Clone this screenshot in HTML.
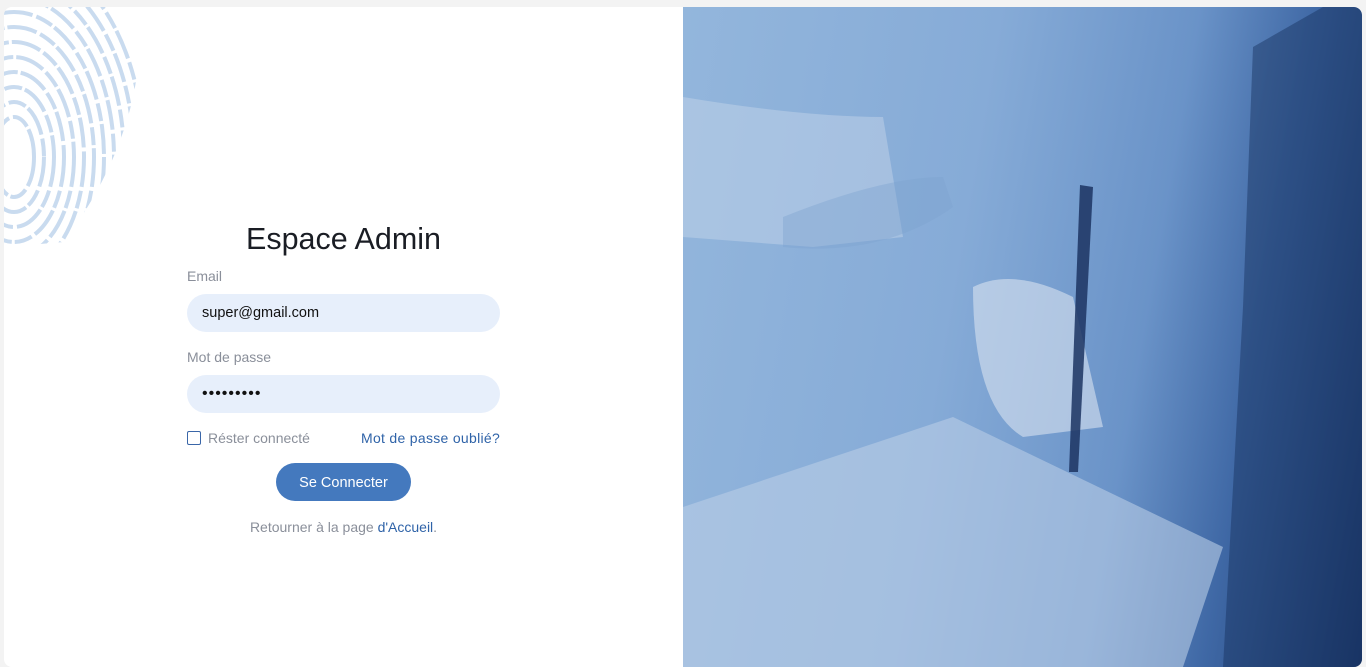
<!DOCTYPE html>
<html><head><meta charset="utf-8"><style>
*{margin:0;padding:0;box-sizing:border-box}
body{width:1366px;height:658px;background:#f3f3f3;font-family:"Liberation Sans",sans-serif;position:relative;overflow:hidden}
.card{position:absolute;left:4px;top:7px;width:1358px;height:660px;background:#fff;border-radius:8px;overflow:hidden}
.fp{position:absolute;left:0;top:0}
.right{position:absolute;left:679px;top:0;width:679px;height:660px;border-top-right-radius:8px;overflow:hidden;background:linear-gradient(100deg,#93b6dc 0%,#86abd7 40%,#6a93c8 65%,#3f68a5 80%,#1b376a 100%)}
h1{position:absolute;left:0;width:679px;top:215px;text-align:center;font-size:30.5px;font-weight:normal;color:#1a1d24}
.lbl{position:absolute;left:183px;font-size:14px;color:#8a8f9a}
.inp{position:absolute;left:183px;width:313px;height:38px;border-radius:19px;background:#e7effb;font-size:14.5px;color:#111;padding:11px 15px}
.cb{position:absolute;left:183px;top:424px;width:14px;height:14px;border:1.5px solid #3a66a8;border-radius:2px}
.btn{position:absolute;left:272px;top:456px;width:135px;height:38px;border-radius:19px;background:#4479be;color:#fff;font-size:14.5px;text-align:center;line-height:40px}
</style></head><body>
<div class="card">
<svg class="fp" width="140" height="240" viewBox="0 0 140 240">
<defs><clipPath id="c"><path d="M0 0H135Q145 120 60 235L0 240Z"/></clipPath></defs>
<g clip-path="url(#c)" fill="none" stroke="#c9dbef" stroke-width="4" stroke-dasharray="30 4 18 3">
<ellipse cx="10" cy="150" rx="20" ry="40"/><ellipse cx="10" cy="150" rx="30" ry="55"/><ellipse cx="10" cy="150" rx="40" ry="70"/><ellipse cx="10" cy="150" rx="50" ry="85"/><ellipse cx="10" cy="150" rx="60" ry="100"/><ellipse cx="10" cy="150" rx="70" ry="115"/><ellipse cx="10" cy="150" rx="80" ry="130"/><ellipse cx="10" cy="150" rx="90" ry="145"/><ellipse cx="10" cy="150" rx="100" ry="160"/><ellipse cx="10" cy="150" rx="110" ry="175"/><ellipse cx="10" cy="150" rx="120" ry="190"/><ellipse cx="10" cy="150" rx="130" ry="205"/>
</g></svg>
<h1>Espace Admin</h1>
<div class="lbl" style="top:261px">Email</div>
<div class="inp" style="top:287px">super@gmail.com</div>
<div class="lbl" style="top:342px">Mot de passe</div>
<div class="inp" style="top:368px;font-size:16px;letter-spacing:1px;padding-top:10px">•••••••••</div>
<div class="cb"></div>
<div class="lbl" style="left:204px;top:423px">Réster connecté</div>
<div class="lbl" style="left:357px;top:423px;color:#2f63a8;letter-spacing:.3px">Mot de passe oublié?</div>
<div class="btn">Se Connecter</div>
<div class="lbl" style="left:0;width:679px;text-align:center;top:512px">Retourner à la page <span style="color:#2f63a8">d'Accueil</span>.</div>
<div class="right">
<svg width="679" height="660" viewBox="0 0 679 660">
<path d="M0 90Q120 110 200 110L220 230L130 240L0 230Z" fill="#c7d8ec" opacity=".45"/>
<path d="M0 500L270 410L540 540L500 660L0 660Z" fill="#b9cde6" opacity=".6"/>
<path d="M570 40L640 0L679 0L679 660L540 660L560 300Z" fill="#17305e" opacity=".45"/>
<path d="M290 280Q330 260 390 290L420 420L340 430Q290 400 290 280Z" fill="#d8e2f0" opacity=".6"/>
<path d="M397 178L410 180L395 465L386 465Z" fill="#1c3461" opacity=".85"/>
<path d="M100 210Q200 170 260 170L270 200Q200 250 100 240Z" fill="#7ea2cf" opacity=".4"/>
</svg>
</div>
</div>
</body></html>
